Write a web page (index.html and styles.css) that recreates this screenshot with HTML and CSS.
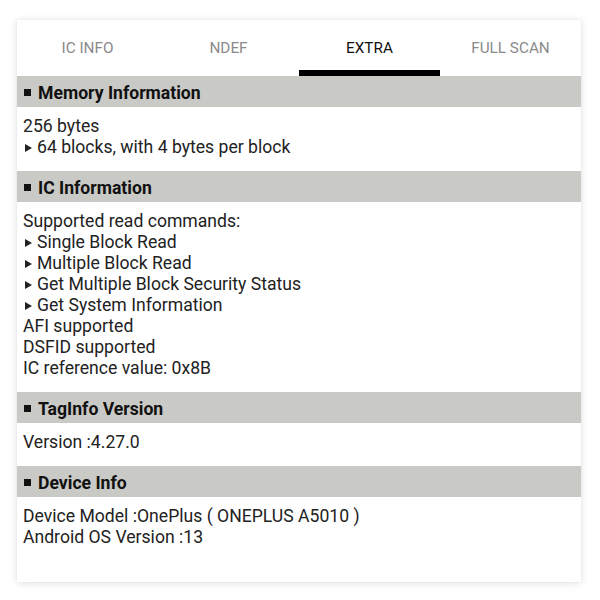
FILE: index.html
```html
<!DOCTYPE html>
<html>
<head>
<meta charset="utf-8">
<link rel="stylesheet" href="styles.css">
</head>
<body>
<div class="card">
  <div class="tabs">
    <div class="tab">IC INFO</div>
    <div class="tab">NDEF</div>
    <div class="tab active">EXTRA</div>
    <div class="tab">FULL SCAN</div>
  </div>
  <div class="section">
    <div class="head"><span class="sq"></span>Memory Information</div>
    <div class="body">
      <div>256 bytes</div>
      <div><span class="tri"></span>64 blocks, with 4 bytes per block</div>
    </div>
  </div>
  <div class="section">
    <div class="head"><span class="sq"></span>IC Information</div>
    <div class="body">
      <div>Supported read commands:</div>
      <div><span class="tri"></span>Single Block Read</div>
      <div><span class="tri"></span>Multiple Block Read</div>
      <div><span class="tri"></span>Get Multiple Block Security Status</div>
      <div><span class="tri"></span>Get System Information</div>
      <div>AFI supported</div>
      <div>DSFID supported</div>
      <div>IC reference value: 0x8B</div>
    </div>
  </div>
  <div class="section">
    <div class="head"><span class="sq"></span>TagInfo Version</div>
    <div class="body">
      <div>Version :4.27.0</div>
    </div>
  </div>
  <div class="section">
    <div class="head"><span class="sq"></span>Device Info</div>
    <div class="body">
      <div>Device Model :OnePlus ( ONEPLUS A5010 )</div>
      <div>Android OS Version :13</div>
    </div>
  </div>
</div>
</body>
</html>
```
FILE: styles.css
```css
html, body {
  margin: 0;
  padding: 0;
  background: #ffffff;
}
body {
  font-family: Roboto, "Liberation Sans", sans-serif;
  padding: 20px 19px 18px 17px;
}
.card {
  width: 564px;
  height: 562px;
  background: #ffffff;
  box-shadow: 0 1px 8px rgba(0, 0, 0, 0.12), 0 0 2px rgba(0, 0, 0, 0.06);
  box-sizing: border-box;
  overflow: hidden;
}
.tabs {
  display: grid;
  grid-template-columns: repeat(4, 1fr);
  height: 56px;
}
.tab {
  display: flex;
  align-items: center;
  justify-content: center;
  padding-top: 5px;
  box-sizing: border-box;
  border-bottom: 6px solid transparent;
  font-size: 15.3px;
  color: #8a8a8a;
}
.tab.active {
  color: #111111;
  border-bottom-color: #000000;
}
.head {
  height: 31px;
  box-sizing: border-box;
  padding-top: 2px;
  background: #c9c9c5;
  display: flex;
  align-items: center;
  padding-left: 7px;
  font-size: 17.6px;
  font-weight: bold;
  color: #111111;
}
.sq {
  width: 7px;
  height: 7px;
  background: #111111;
  margin-right: 7px;
}
.body {
  padding: 9px 0 13px 6px;
  font-size: 17.6px;
  line-height: 21px;
  color: #222222;
}
.tri {
  display: inline-block;
  width: 0;
  height: 0;
  border-top: 4.5px solid transparent;
  border-bottom: 4.5px solid transparent;
  border-left: 7px solid #222222;
  margin: 0 5px 1px 2px;
  vertical-align: middle;
}
```
